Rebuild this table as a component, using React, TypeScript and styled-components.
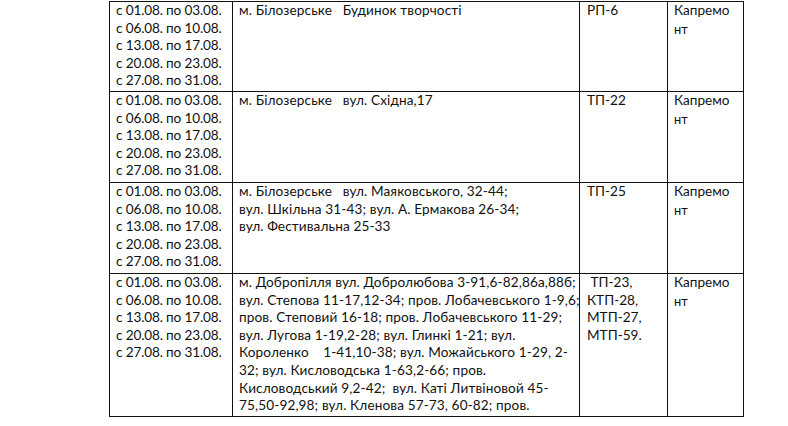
import React from "react";
import styled, { createGlobalStyle } from "styled-components";

const GlobalStyle = createGlobalStyle`
  html, body { margin: 0; padding: 0; background: #fff; }
  body { font-family: Lato, "Open Sans", "Liberation Sans", sans-serif; color: #111; }
`;

const DATES = [
  "с 01.08. по 03.08.",
  "с 06.08. по 10.08.",
  "с 13.08. по 17.08.",
  "с 20.08. по 23.08.",
  "с 27.08. по 31.08.",
];

interface Row {
  height: number;
  address: string[];
  station: string[];
}

const ROWS: Row[] = [
  { height: 90, address: ["м. Білозерське   Будинок творчості"], station: ["РП-6"] },
  { height: 91, address: ["м. Білозерське   вул. Східна,17"], station: ["ТП-22"] },
  {
    height: 91,
    address: [
      "м. Білозерське   вул. Маяковського, 32-44;",
      "вул. Шкільна 31-43; вул. А. Ермакова 26-34;",
      "вул. Фестивальна 25-33",
    ],
    station: ["ТП-25"],
  },
  {
    height: 143,
    address: [
      "м. Добропілля вул. Добролюбова 3-91,6-82,86а,88б;",
      "вул. Степова 11-17,12-34; пров. Лобачевського 1-9,6;",
      "пров. Степовий 16-18; пров. Лобачевського 11-29;",
      "вул. Лугова 1-19,2-28; вул. Глинкі 1-21; вул.",
      "Короленко    1-41,10-38; вул. Можайського 1-29, 2-",
      "32; вул. Кисловодська 1-63,2-66; пров.",
      "Кисловодський 9,2-42;  вул. Каті Литвіновой 45-",
      "75,50-92,98; вул. Кленова 57-73, 60-82; пров.",
    ],
    station: [" ТП-23,", "КТП-28,", "МТП-27,", "МТП-59."],
  },
];

export default function App() {
  return (
    <>
      <GlobalStyle />
      <Page>
        <Table>
          <colgroup>
            <col style={{ width: 123 }} />
            <col style={{ width: 347 }} />
            <col style={{ width: 88 }} />
            <col style={{ width: 76 }} />
          </colgroup>
          <tbody>
            {ROWS.map((r, i) => (
              <tr key={i} style={{ height: r.height }}>
                <Cell $spacing={-0.15}>
                  {DATES.map((d) => (
                    <Line key={d}>{d}</Line>
                  ))}
                </Cell>
                <Cell $spacing={0.12}>
                  {r.address.map((a, j) => (
                    <Line key={j}>{a}</Line>
                  ))}
                </Cell>
                <Cell $pad={7}>
                  {r.station.map((s, j) => (
                    <Line key={j}>{s}</Line>
                  ))}
                </Cell>
                <Cell>
                  <Line>Капремо</Line>
                  <Line $small>нт</Line>
                </Cell>
              </tr>
            ))}
          </tbody>
        </Table>
      </Page>
    </>
  );
}

// ===================== styled ===================== //
const Page = styled.main`
  width: 788px;
  height: 426px;
  overflow: hidden;
  padding: 1px 0 0 109px;
  box-sizing: border-box;
`;

const Table = styled.table`
  border-collapse: collapse;
  table-layout: fixed;
  width: 635px;
`;

const Cell = styled.td<{ $pad?: number; $spacing?: number }>`
  border: 1px solid #111;
  vertical-align: top;
  padding: 0 4px 0 ${({ $pad }) => $pad ?? 6}px;
  font-size: 13.6px;
  line-height: 17.6px;
  letter-spacing: ${({ $spacing }) => $spacing ?? 0}px;
`;

const Line = styled.div<{ $small?: boolean }>`
  white-space: pre;
  font-size: ${({ $small }) => ($small ? "12.8px" : "inherit")};
  line-height: ${({ $small }) => ($small ? "19px" : "inherit")};
`;
